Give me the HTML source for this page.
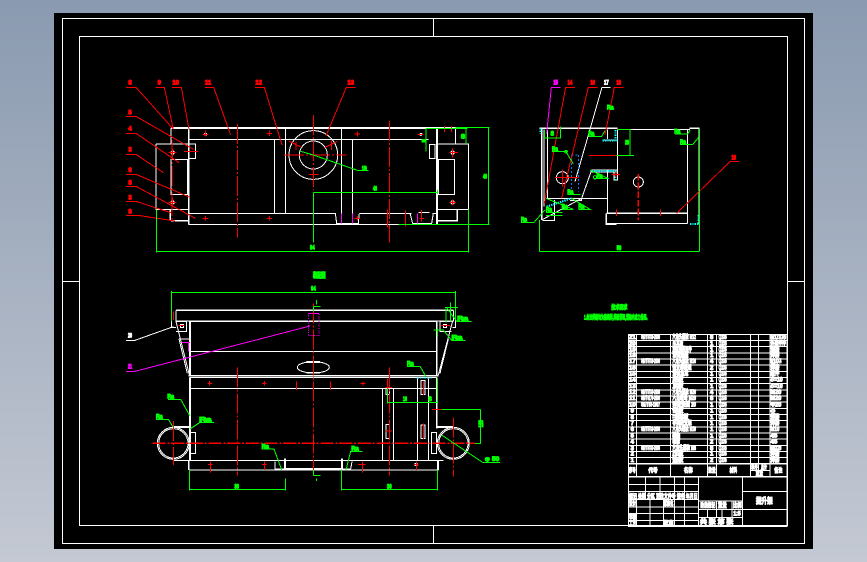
<!DOCTYPE html>
<html><head><meta charset="utf-8"><style>
html,body{margin:0;padding:0;width:867px;height:562px;overflow:hidden;background:linear-gradient(#8a9ab0,#c4c9d3)}
svg{position:absolute;left:0;top:0;display:block}
.g{fill:none;stroke-width:3;shape-rendering:crispEdges}
.w{stroke:#fff}.r{stroke:#f00}.n{stroke:#0f0}.m{stroke:#f0f}.c{stroke:#0ff}.b{stroke:#0080ff}
.d{stroke-dasharray:60 6 6 6}
text{font-family:"Liberation Sans","Noto Sans CJK SC",sans-serif;font-weight:bold;font-size:18px;stroke-width:3}
.tw{fill:#fff;stroke:#fff}.tr{fill:#f00;stroke:#f00}.tn{fill:#0f0;stroke:#0f0}.tm{fill:#f0f;stroke:#f0f}
.a{text-anchor:middle}
</style></head><body>
<svg width="867" height="562" viewBox="0 0 867 562">
<rect x="54" y="13" width="759" height="536" fill="#000"/>
<g fill="none" stroke="#fff" stroke-width="1" shape-rendering="crispEdges">
<rect x="62.5" y="18.5" width="742" height="525"/>
<rect x="79.5" y="36.5" width="708" height="489"/>
<path d="M433.5 18V36M433.5 526V543M62 281.5H79M788 281.5H804"/>
</g>

<!-- top view -->
<g transform="translate(110 70) scale(.33333)" class="g">
<g class="w">
<path stroke-width="5" d="M183 174H1036M236 174V463M981 174V463M183 452H235M982 452H1042V418M181 418V452"/>
<path d="M183 174V222M138 222H257V266H238M138 222V418H235M183 268H233V373H183ZM235 208H955M235 430H678M748 430H905M968 430H982M235 463H865M493 208V430M526 174V430M694 174V460M727 208V460"/>
<circle cx="610" cy="255" r="73"/><circle cx="610" cy="255" r="42"/>
<path d="M1036 174V222M982 222H1076V418H982M985 268H1034V373H985ZM958 224H975V266H958ZM676 430L680 460H745L748 430M900 430L908 460H965L970 430M926 428H958"/>
<circle cx="188" cy="248" r="5" fill="#fff"/><circle cx="188" cy="397" r="5" fill="#fff"/><circle cx="1028" cy="248" r="5" fill="#fff"/><circle cx="1028" cy="397" r="5"/><circle cx="287" cy="193" r="3" fill="#fff"/><circle cx="933" cy="193" r="3" fill="#fff"/>
</g>
<g class="m"><path d="M694 430V460M727 430V460M922 430V460"/></g>
<g class="r">
<path class="d" d="M382 162V503M838 153V518M610 135V360M522 255H710M186 210V452"/>
<path d="M222 244H264M175 248H200M188 236V262M175 397H200M188 384V410M1018 248H1044M1028 236V262M1018 397H1038M1028 388V406M278 193H295M287 182V200M470 190H486M478 182V198M734 192H750M742 184V200M922 193H940M278 445H295M287 438V452M470 445H486M478 438V452M734 445H750M742 438V452M928 445H942M935 420V455M595 313H625M610 305V322M832 418V472M886 422V470M1004 168V186M1024 168V186M538 214L575 232M682 214L645 232M558 215V240M665 212V240"/>
<path d="M48 52H78L188 175M136 52H163L190 178M186 52H214L237 178M285 52H311L362 195M435 52H463L516 225M737 52H709L648 198M48 139H78L250 238M48 190H78L207 278M48 253H78L160 308M48 313H78L240 382M48 349H78L256 445M48 394H78L188 430M48 436H84L195 453"/>
</g>
<g class="n">
<path d="M140 418V547M1075 418V547M140 544H1075M610 367H982M610 367V518M982 360V372M1036 172H1138M865 463H1138M1135 172V463M948 176V245M948 176H1072M1068 176V222M572 244L610 255L745 302H776"/>
<rect x="936" y="208" width="9" height="8" fill="#0f0"/>
</g>
<text class="tr a" x="60" y="44">8</text><text class="tr a" x="148" y="44">9</text><text class="tr a" x="197" y="44">10</text><text class="tr a" x="294" y="44">11</text><text class="tr a" x="446" y="44">12</text><text class="tr a" x="722" y="44">13</text>
<text class="tr a" x="60" y="134">5</text><text class="tr a" x="60" y="182">4</text><text class="tr a" x="60" y="245">3</text><text class="tr a" x="60" y="306">6</text><text class="tr a" x="60" y="344">8</text><text class="tr a" x="60" y="389">3</text><text class="tr a" x="60" y="431">8</text>
<text class="tn a" x="763" y="301" textLength="15" lengthAdjust="spacingAndGlyphs">150</text>
<text class="tn a" x="795" y="362" textLength="12" lengthAdjust="spacingAndGlyphs">40</text>
<text class="tn a" x="607" y="539" textLength="14" lengthAdjust="spacingAndGlyphs">94</text>
<text class="tn a" x="1125" y="325" textLength="12" lengthAdjust="spacingAndGlyphs">40</text>
<text class="tn a" x="1059" y="206" textLength="12" lengthAdjust="spacingAndGlyphs">8</text>
</g>

<!-- side view -->
<g transform="translate(510 70) scale(.33333)" class="g">
<g class="w">
<path stroke-width="5" d="M88 175H322M538 175H568M95 175V450M568 175V462M289 430H532M289 430V462H320"/>
<path d="M102 178V410M322 178H540M112 180V385H292M292 300V430M532 178V460M322 178V300M292 178V207M278 210H322M245 300H322M245 306H322M245 300L215 385L95 450M97 452H133V390M320 460H532M322 300V330H312V305M215 385V392H180"/>
<circle cx="157" cy="323" r="18"/><circle cx="385" cy="336" r="15"/>
<path d="M302 52H276L195 335"/>
</g>
<path class="b" stroke-dasharray="6 6" d="M185 255V365M205 255V365M185 255H205"/>
<path class="c" stroke-width="6" stroke-dasharray="4 3" d="M316 180V210M278 212H322M245 303H320M316 320V330M540 462H568M566 435V460M110 410L185 385M92 175V190"/>
<g class="r">
<path d="M157 298V350M135 323H205M237 256H360M305 313H330M318 305V322M319 418V438M451 418V438"/><path stroke-width="4" stroke-dasharray="20 6" d="M385 312V450"/>
<path d="M195 52H167L103 400M263 52H235L155 385M341 52H313L285 195M687 274H661L500 430"/>
</g>
<path class="m" d="M152 52H124L110 190"/>
<g class="n">
<path d="M88 450V545M568 175V545M88 544H568M322 178H362M360 178V257M320 257H372M104 178V204H152V170M33 457H72L105 420M126 245H168L190 282M235 199H275L285 182M495 192H533L540 180M510 224H548L566 202M250 326H296L240 300M172 374H212M155 418H190L108 385M205 418H240L185 385M108 436H158M108 427H158"/>
<circle cx="168" cy="245" r="4"/><circle cx="255" cy="322" r="5"/>
</g>
<text class="tm a" x="137" y="44" textLength="14" lengthAdjust="spacingAndGlyphs">15</text><text class="tr a" x="180" y="44" textLength="14" lengthAdjust="spacingAndGlyphs">14</text><text class="tr a" x="248" y="44" textLength="14" lengthAdjust="spacingAndGlyphs">16</text><text class="tw a" x="289" y="44" textLength="14" lengthAdjust="spacingAndGlyphs">17</text><text class="tr a" x="326" y="44" textLength="14" lengthAdjust="spacingAndGlyphs">18</text><text class="tr a" x="671" y="268" textLength="14" lengthAdjust="spacingAndGlyphs">19</text>
<text class="tn a" x="301" y="119" textLength="20" lengthAdjust="spacingAndGlyphs">Ra</text>
<text class="tn a" x="351" y="224" textLength="12" lengthAdjust="spacingAndGlyphs">30</text>
<text class="tn a" x="327" y="540" textLength="14" lengthAdjust="spacingAndGlyphs">50</text>
<text class="tn a" x="127" y="197" textLength="10" lengthAdjust="spacingAndGlyphs">8</text>
<text class="tn" x="33" y="455" textLength="18" lengthAdjust="spacingAndGlyphs">Ra</text><text class="tn" x="126" y="243" textLength="18" lengthAdjust="spacingAndGlyphs">Ra</text><text class="tn" x="235" y="197" textLength="18" lengthAdjust="spacingAndGlyphs">Ra</text><text class="tn" x="493" y="190" textLength="18" lengthAdjust="spacingAndGlyphs">Ra</text><text class="tn" x="510" y="222" textLength="18" lengthAdjust="spacingAndGlyphs">Ra</text><text class="tn" x="260" y="324" textLength="18" lengthAdjust="spacingAndGlyphs">Ra</text><text class="tn" x="172" y="372" textLength="18" lengthAdjust="spacingAndGlyphs">Ra</text><text class="tn" x="155" y="416" textLength="18" lengthAdjust="spacingAndGlyphs">Ra</text><text class="tn" x="205" y="416" textLength="18" lengthAdjust="spacingAndGlyphs">Ra</text><text class="tn" x="108" y="425" textLength="18" lengthAdjust="spacingAndGlyphs">Ra</text>
</g>

<!-- front view -->
<g transform="translate(110 265) scale(.33333)" class="g">
<g class="w">
<path stroke-width="5" d="M198 136H1030M240 170V330M980 170V330M235 332H985M240 338V585M980 338V450M236 586V615M984 586V615M527 612H694M525 580V612M696 580V612M240 450V490M980 450V490M192 486H240M980 486H1030M590 291H630M590 323H630"/>
<path d="M198 136V168H1030V136M198 168H240M980 168H1030M240 170H980M240 260H980M238 338H980M238 370H980M198 170L238 330M1028 168L985 330M207 222L232 325M1015 222L990 325M207 222H240M238 586H1000M190 586H238M238 615H985M817 370V585M850 370V585M922 340V585M955 340V585M240 502H257V565H240ZM980 502H965V565H980ZM495 590V612H527M726 590L722 612H696M184 145V188H198M1036 145V188H1028M198 170H230V200H198M1024 170H990V200H1024"/>
<ellipse cx="610" cy="307" rx="48" ry="17"/>
<circle cx="190" cy="535" r="48"/><circle cx="190" cy="535" r="44"/><circle cx="1030" cy="535" r="48"/><circle cx="1030" cy="535" r="44"/>
<rect x="933" y="347" width="12" height="42"/><rect x="933" y="480" width="12" height="40"/><rect x="828" y="370" width="10" height="18"/><rect x="828" y="478" width="10" height="42"/>
<rect x="211" y="178" width="9" height="9"/><rect x="1000" y="178" width="9" height="9"/><rect x="915" y="596" width="6" height="6" fill="#fff"/>
<path d="M48 226H75L190 185"/>
</g>
<g class="m">
<path stroke-dasharray="3 4" d="M595 145V212H627V145"/><path d="M595 145H627M48 319H75L600 183M215 233H240M236 233V260"/>
</g>
<g class="r">
<path stroke-width="4" stroke-dasharray="40 5 6 5" d="M127 535H1095"/>
<path class="d" d="M382 307V632M838 307V632M610 115V620M190 468V600M1030 458V635"/>
<path d="M292 355H306M299 348V362M456 355H470M463 348V362M752 355H766M759 349V362M294 598H308M301 590V622M456 598H470M463 590V615M744 598H766M757 590V622M912 598H926M919 590V615M559 350V375M661 350V375M826 368H846M832 342V390M940 350V390M826 498H846M838 470V525M940 475V522M966 433H995M205 181H222M995 181H1020M190 140V165"/>
</g>
<g class="n">
<path d="M185 82H1036M185 78V170M1036 78V165M238 615V677M526 640V677M238 673H526M694 615V677M982 615V677M694 673H982M832 412H982M832 370V415M982 340V415M995 433H1112M1112 433V535H1095M995 510L1118 592H1170M174 403H212L240 453M138 463H175L190 488M312 472H270L240 492M455 552H492L515 615M758 559H722L708 615M891 304H930L948 335M1085 169H1040L1010 128M1005 127H1044M1022 112V170M1008 130V172M1067 226H1025L1000 195H970M982 190V215M610 125H632M610 125V140M610 632H632M610 615V632M620 640V648M620 105V118"/>
</g>
<path class="c" stroke-width="4" stroke-dasharray="4 3" d="M916 339H966"/>
<text class="tn a" x="628" y="37" textLength="38" lengthAdjust="spacingAndGlyphs" style="font-size:20px">装配图</text>
<text class="tn a" x="610" y="77" textLength="14" lengthAdjust="spacingAndGlyphs">94</text>
<text class="tn a" x="380" y="670" textLength="14" lengthAdjust="spacingAndGlyphs">30</text>
<text class="tn a" x="838" y="670" textLength="14" lengthAdjust="spacingAndGlyphs">30</text>
<text class="tn a" x="885" y="408" textLength="12" lengthAdjust="spacingAndGlyphs">16</text>
<text class="tn a" x="960" y="408" textLength="10" lengthAdjust="spacingAndGlyphs">8</text>
<text class="tn" x="1108" y="498" transform="rotate(-90 1108 487)" textLength="22" lengthAdjust="spacingAndGlyphs">120</text>
<text class="tn" x="1125" y="588" textLength="14" lengthAdjust="spacingAndGlyphs">φ</text><text class="tn" x="1146" y="588" textLength="22" lengthAdjust="spacingAndGlyphs">50</text>
<text class="tw a" x="60" y="218" textLength="12" lengthAdjust="spacingAndGlyphs">20</text>
<text class="tm a" x="60" y="311" textLength="12" lengthAdjust="spacingAndGlyphs">21</text>
<text class="tn" x="172" y="401" textLength="20" lengthAdjust="spacingAndGlyphs">Ra</text><text class="tn" x="138" y="461" textLength="20" lengthAdjust="spacingAndGlyphs">Ra</text><text class="tn" x="268" y="470" textLength="36" lengthAdjust="spacingAndGlyphs">Ra</text><text class="tn" x="455" y="550" textLength="22" lengthAdjust="spacingAndGlyphs">Ra</text><text class="tn" x="724" y="557" textLength="22" lengthAdjust="spacingAndGlyphs">Ra</text><text class="tn" x="891" y="302" textLength="20" lengthAdjust="spacingAndGlyphs">Ra</text><text class="tn" x="1042" y="167" textLength="32" lengthAdjust="spacingAndGlyphs">Ra</text><text class="tn" x="1025" y="224" textLength="32" lengthAdjust="spacingAndGlyphs">Ra</text>
</g>

<!-- technical notes -->
<g transform="translate(570 295) scale(.33333)">
<text class="tn" x="124" y="43" textLength="48" lengthAdjust="spacingAndGlyphs">技术要求</text>
<text class="tn" x="42" y="73" textLength="196" lengthAdjust="spacingAndGlyphs">1.未注焊缝均为连续焊,焊后清理,消除内应力处理。</text>
</g>

<!-- title block -->
<g transform="translate(620 325) scale(.33333)" class="g">
<g class="w">
<path d="M25 28H501V605H25ZM25 46.500H501M25 65H501M25 83.500H501M25 102H501M25 120.500H501M25 139H501M25 157.500H501M25 176H501M25 194.500H501M25 213H501M25 231.500H501M25 250H501M25 268.500H501M25 287H501M25 305.500H501M25 324H501M25 342.500H501M25 361H501M25 379.500H501M25 398H501"/>
<path stroke-width="4" d="M25 416H501M25 455H501"/>
<path d="M50 28V455M152 28V455M262 28V455M290 28V455M392 28V455M416 28V437M450 28V455M392 437H450"/>
<path d="M25 478H235M25 500H235M25 524H235M25 546H235M25 566H235M25 586H235M50 524V605M77 455V524M90 524V605M120 455V524M130 524V605M163 455V605M193 455V605M235 455V605M368 455V605M368 500H501M368 553H501M235 528H368M235 553H368M235 578H368M262 553V578M290 528V578M306 553V578M336 528V578"/>
</g>
<g class="tw">
<text class="tw a" x="37" y="42">21</text><text class="tw a" x="37" y="61">20</text><text class="tw a" x="37" y="79">19</text><text class="tw a" x="37" y="96">18</text><text class="tw a" x="37" y="114">17</text><text class="tw a" x="37" y="133">16</text><text class="tw a" x="37" y="152">15</text><text class="tw a" x="37" y="170">14</text><text class="tw a" x="37" y="189">13</text><text class="tw a" x="37" y="207">12</text><text class="tw a" x="37" y="225">11</text><text class="tw a" x="37" y="245">10</text><text class="tw a" x="37" y="263">9</text><text class="tw a" x="37" y="282">8</text><text class="tw a" x="37" y="300">7</text><text class="tw a" x="37" y="318">6</text><text class="tw a" x="37" y="337">5</text><text class="tw a" x="37" y="356">4</text><text class="tw a" x="37" y="375">3</text><text class="tw a" x="37" y="392">2</text><text class="tw a" x="37" y="411">1</text>

<text class="tw" x="63" y="42" textLength="57" lengthAdjust="spacingAndGlyphs">GB/T5783-2000</text><text class="tw" x="63" y="114" textLength="57" lengthAdjust="spacingAndGlyphs">GB/T5783-2000</text><text class="tw" x="63" y="207" textLength="57" lengthAdjust="spacingAndGlyphs">GB/T5783-2000</text><text class="tw" x="63" y="225" textLength="57" lengthAdjust="spacingAndGlyphs">GB/T6170-2000</text><text class="tw" x="63" y="245" textLength="57" lengthAdjust="spacingAndGlyphs">GB/T93-1987</text><text class="tw" x="63" y="318" textLength="57" lengthAdjust="spacingAndGlyphs">GB/T5783-2000</text><text class="tw" x="63" y="375" textLength="57" lengthAdjust="spacingAndGlyphs">GB/T5783-2000</text>

<text class="tw" x="157" y="42" textLength="71" lengthAdjust="spacingAndGlyphs">六角头螺栓 M12</text><text class="tw" x="157" y="61" textLength="33" lengthAdjust="spacingAndGlyphs">吊耳板</text><text class="tw" x="157" y="79" textLength="58" lengthAdjust="spacingAndGlyphs">加强筋板组件</text><text class="tw" x="157" y="96" textLength="48" lengthAdjust="spacingAndGlyphs">滑轮轴座</text><text class="tw" x="157" y="114" textLength="71" lengthAdjust="spacingAndGlyphs">六角头螺栓 M16</text><text class="tw" x="157" y="133" textLength="58" lengthAdjust="spacingAndGlyphs">侧支撑板组</text><text class="tw" x="157" y="152" textLength="48" lengthAdjust="spacingAndGlyphs">滑轮总成</text><text class="tw" x="157" y="170" textLength="33" lengthAdjust="spacingAndGlyphs">底板</text><text class="tw" x="157" y="189" textLength="33" lengthAdjust="spacingAndGlyphs">顶板</text><text class="tw" x="157" y="207" textLength="71" lengthAdjust="spacingAndGlyphs">六角头螺栓 M20</text><text class="tw" x="157" y="225" textLength="71" lengthAdjust="spacingAndGlyphs">六角螺母 M20</text><text class="tw" x="157" y="245" textLength="71" lengthAdjust="spacingAndGlyphs">弹簧垫圈 20</text><text class="tw" x="157" y="263" textLength="33" lengthAdjust="spacingAndGlyphs">侧板</text><text class="tw" x="157" y="282" textLength="48" lengthAdjust="spacingAndGlyphs">=横梁板</text><text class="tw" x="157" y="300" textLength="58" lengthAdjust="spacingAndGlyphs">导向轮支架</text><text class="tw" x="157" y="318" textLength="71" lengthAdjust="spacingAndGlyphs">六角头螺栓 M10</text><text class="tw" x="157" y="337" textLength="23" lengthAdjust="spacingAndGlyphs">轴</text><text class="tw" x="157" y="356" textLength="23" lengthAdjust="spacingAndGlyphs">轴套</text><text class="tw" x="157" y="375" textLength="71" lengthAdjust="spacingAndGlyphs">六角头螺栓 M8</text><text class="tw" x="157" y="392" textLength="33" lengthAdjust="spacingAndGlyphs">压板</text><text class="tw" x="157" y="411" textLength="33" lengthAdjust="spacingAndGlyphs">垫板</text>

<text class="tw a" x="275" y="42">8</text><text class="tw a" x="275" y="61">1</text><text class="tw a" x="275" y="79">1</text><text class="tw a" x="275" y="96">1</text><text class="tw a" x="275" y="114">4</text><text class="tw a" x="275" y="133">2</text><text class="tw a" x="275" y="152">1</text><text class="tw a" x="275" y="170">1</text><text class="tw a" x="275" y="189">1</text><text class="tw a" x="275" y="207">4</text><text class="tw a" x="275" y="225">8</text><text class="tw a" x="275" y="245">1</text><text class="tw a" x="275" y="263">1</text><text class="tw a" x="275" y="282">1</text><text class="tw a" x="275" y="300">1</text><text class="tw a" x="275" y="318">1</text><text class="tw a" x="275" y="337">1</text><text class="tw a" x="275" y="356">2</text><text class="tw a" x="275" y="375">8</text><text class="tw a" x="275" y="392">1</text><text class="tw a" x="275" y="411">2</text>

<text class="tw" x="296" y="42" textLength="24" lengthAdjust="spacingAndGlyphs">Q235</text><text class="tw" x="296" y="61" textLength="24" lengthAdjust="spacingAndGlyphs">Q235</text><text class="tw" x="296" y="79" textLength="24" lengthAdjust="spacingAndGlyphs">Q235</text><text class="tw" x="296" y="96" textLength="24" lengthAdjust="spacingAndGlyphs">Q235</text><text class="tw" x="296" y="114" textLength="24" lengthAdjust="spacingAndGlyphs">Q235</text><text class="tw" x="296" y="133" textLength="24" lengthAdjust="spacingAndGlyphs">Q235</text><text class="tw" x="296" y="152" textLength="24" lengthAdjust="spacingAndGlyphs">Q235</text><text class="tw" x="296" y="170" textLength="24" lengthAdjust="spacingAndGlyphs">Q235</text><text class="tw" x="296" y="189" textLength="24" lengthAdjust="spacingAndGlyphs">Q235</text><text class="tw" x="296" y="207" textLength="24" lengthAdjust="spacingAndGlyphs">Q235</text><text class="tw" x="296" y="225" textLength="24" lengthAdjust="spacingAndGlyphs">Q235</text><text class="tw" x="296" y="245" textLength="24" lengthAdjust="spacingAndGlyphs">Q235</text><text class="tw" x="296" y="263" textLength="24" lengthAdjust="spacingAndGlyphs">Q235</text><text class="tw" x="296" y="282" textLength="24" lengthAdjust="spacingAndGlyphs">Q235</text><text class="tw" x="296" y="300" textLength="24" lengthAdjust="spacingAndGlyphs">Q235</text><text class="tw" x="296" y="318" textLength="24" lengthAdjust="spacingAndGlyphs">Q235</text><text class="tw" x="296" y="337" textLength="24" lengthAdjust="spacingAndGlyphs">Q235</text><text class="tw" x="296" y="356" textLength="24" lengthAdjust="spacingAndGlyphs">Q235</text><text class="tw" x="296" y="375" textLength="24" lengthAdjust="spacingAndGlyphs">Q235</text><text class="tw" x="296" y="392" textLength="24" lengthAdjust="spacingAndGlyphs">Q235</text><text class="tw" x="296" y="411" textLength="24" lengthAdjust="spacingAndGlyphs">Q235</text>

<text class="tw" x="452" y="42" textLength="46" lengthAdjust="spacingAndGlyphs">M12X35</text><text class="tw" x="452" y="61" textLength="46" lengthAdjust="spacingAndGlyphs">外购件件</text><text class="tw" x="452" y="79" textLength="26" lengthAdjust="spacingAndGlyphs">焊接</text><text class="tw" x="452" y="96" textLength="26" lengthAdjust="spacingAndGlyphs">焊接</text><text class="tw" x="452" y="114" textLength="32" lengthAdjust="spacingAndGlyphs">M16X4</text><text class="tw" x="452" y="133" textLength="26" lengthAdjust="spacingAndGlyphs">焊接</text><text class="tw" x="452" y="152" textLength="26" lengthAdjust="spacingAndGlyphs">组件</text><text class="tw" x="452" y="170" textLength="36" lengthAdjust="spacingAndGlyphs">δ=10</text><text class="tw" x="452" y="189" textLength="36" lengthAdjust="spacingAndGlyphs">δ=10</text><text class="tw" x="452" y="207" textLength="32" lengthAdjust="spacingAndGlyphs">M20</text><text class="tw" x="452" y="225" textLength="32" lengthAdjust="spacingAndGlyphs">M20</text><text class="tw" x="452" y="245" textLength="32" lengthAdjust="spacingAndGlyphs">Φ20</text><text class="tw" x="452" y="263" textLength="14" lengthAdjust="spacingAndGlyphs">δ</text><text class="tw" x="452" y="282" textLength="26" lengthAdjust="spacingAndGlyphs">焊接</text><text class="tw" x="452" y="300" textLength="26" lengthAdjust="spacingAndGlyphs">焊接</text><text class="tw" x="452" y="318" textLength="26" lengthAdjust="spacingAndGlyphs">M10</text><text class="tw" x="452" y="337" textLength="20" lengthAdjust="spacingAndGlyphs">45</text><text class="tw" x="452" y="356" textLength="20" lengthAdjust="spacingAndGlyphs">45</text><text class="tw" x="452" y="375" textLength="32" lengthAdjust="spacingAndGlyphs">M8X20</text><text class="tw" x="452" y="392" textLength="26" lengthAdjust="spacingAndGlyphs">焊接</text><text class="tw" x="452" y="411" textLength="26" lengthAdjust="spacingAndGlyphs">焊接</text>

<text class="tw a" x="37" y="442" textLength="20" lengthAdjust="spacingAndGlyphs">序号</text><text class="tw a" x="99" y="442" textLength="28" lengthAdjust="spacingAndGlyphs">代号</text><text class="tw a" x="205" y="442" textLength="26" lengthAdjust="spacingAndGlyphs">名称</text><text class="tw a" x="276" y="442" textLength="22" lengthAdjust="spacingAndGlyphs">数量</text><text class="tw a" x="340" y="442" textLength="22" lengthAdjust="spacingAndGlyphs">材料</text><text class="tw a" x="403" y="433" textLength="20" lengthAdjust="spacingAndGlyphs">单件</text><text class="tw a" x="432" y="433" textLength="18" lengthAdjust="spacingAndGlyphs">总计</text><text class="tw a" x="418" y="452" textLength="22" lengthAdjust="spacingAndGlyphs">重量</text><text class="tw a" x="475" y="442" textLength="24" lengthAdjust="spacingAndGlyphs">备注</text>

<text class="tw" x="27" y="521" textLength="206" lengthAdjust="spacingAndGlyphs">标记 处数 分区 更改文件号 签名 年月日</text>
<text class="tw" x="27" y="542" textLength="22" lengthAdjust="spacingAndGlyphs">设计</text><text class="tw" x="130" y="541" textLength="30" lengthAdjust="spacingAndGlyphs">标准化</text><text class="tw" x="27" y="582" textLength="22" lengthAdjust="spacingAndGlyphs">审核</text><text class="tw" x="27" y="602" textLength="22" lengthAdjust="spacingAndGlyphs">工艺</text><text class="tw" x="130" y="602" textLength="30" lengthAdjust="spacingAndGlyphs">批准</text>
<text class="tw" x="241" y="548" textLength="45" lengthAdjust="spacingAndGlyphs">阶段标记</text><text class="tw" x="294" y="548" textLength="26" lengthAdjust="spacingAndGlyphs">重量</text><text class="tw" x="339" y="548" textLength="26" lengthAdjust="spacingAndGlyphs">比例</text><text class="tw" x="340" y="572" textLength="22" lengthAdjust="spacingAndGlyphs">1:5</text>
<text class="tw" x="240" y="597" textLength="100" lengthAdjust="spacingAndGlyphs">共 张 第 张</text>
<text class="tw a" x="433" y="536" textLength="50" lengthAdjust="spacingAndGlyphs" style="font-size:24px">提升架</text>
</g>
</g>
</svg>
</body></html>
